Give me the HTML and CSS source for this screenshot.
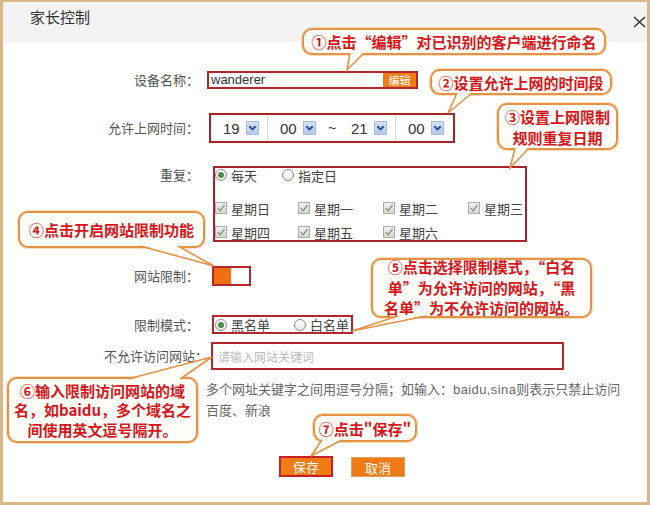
FILE: index.html
```html
<!DOCTYPE html>
<html lang="zh-CN">
<head>
<meta charset="utf-8">
<title>家长控制</title>
<link rel="stylesheet" href="styles.css">
</head>
<body>
<div class="frame">
  <div class="header">
    <span class="title">家长控制</span>
    <svg class="close" width="13" height="12" viewBox="0 0 13 12"><path d="M1 1L12 11M12 1L1 11" stroke="#333" stroke-width="1.5" fill="none"/></svg>
  </div>
  <div class="form">
    <div class="row row-name">
      <span class="lbl">设备名称：</span>
      <div class="name-box"><span class="name-text">wanderer</span><span class="edit-btn">编辑</span></div>
    </div>
    <div class="row row-time">
      <span class="lbl">允许上网时间：</span>
      <div class="time-box">
        <span class="sel sep"><span class="num">19</span><span class="arr"><svg width="12" height="12" viewBox="0 0 12 12"><polyline points="2.5,4 6,7.5 9.5,4" fill="none" stroke="#2b4f8f" stroke-width="2.2"/></svg></span></span>
        <span class="sel"><span class="num">00</span><span class="arr"><svg width="12" height="12" viewBox="0 0 12 12"><polyline points="2.5,4 6,7.5 9.5,4" fill="none" stroke="#2b4f8f" stroke-width="2.2"/></svg></span></span>
        <span class="tilde">~</span>
        <span class="sel sep"><span class="num">21</span><span class="arr"><svg width="12" height="12" viewBox="0 0 12 12"><polyline points="2.5,4 6,7.5 9.5,4" fill="none" stroke="#2b4f8f" stroke-width="2.2"/></svg></span></span>
        <span class="sel"><span class="num">00</span><span class="arr"><svg width="12" height="12" viewBox="0 0 12 12"><polyline points="2.5,4 6,7.5 9.5,4" fill="none" stroke="#2b4f8f" stroke-width="2.2"/></svg></span></span>
      </div>
    </div>
    <div class="row row-repeat">
      <span class="lbl">重复：</span>
      <div class="repeat-box">
        <div class="radios">
          <span class="opt w67"><i class="radio on"></i>每天</span>
          <span class="opt"><i class="radio"></i>指定日</span>
        </div>
        <div class="days">
          <span class="opt"><i class="chk"><svg width="10" height="10" viewBox="0 0 10 10"><polyline points="2,5 4,8 8.5,2" fill="none" stroke="#7f9a70" stroke-width="1.3"/></svg></i>星期日</span>
          <span class="opt"><i class="chk"><svg width="10" height="10" viewBox="0 0 10 10"><polyline points="2,5 4,8 8.5,2" fill="none" stroke="#7f9a70" stroke-width="1.3"/></svg></i>星期一</span>
          <span class="opt"><i class="chk"><svg width="10" height="10" viewBox="0 0 10 10"><polyline points="2,5 4,8 8.5,2" fill="none" stroke="#7f9a70" stroke-width="1.3"/></svg></i>星期二</span>
          <span class="opt"><i class="chk"><svg width="10" height="10" viewBox="0 0 10 10"><polyline points="2,5 4,8 8.5,2" fill="none" stroke="#7f9a70" stroke-width="1.3"/></svg></i>星期三</span>
          <span class="opt"><i class="chk"><svg width="10" height="10" viewBox="0 0 10 10"><polyline points="2,5 4,8 8.5,2" fill="none" stroke="#7f9a70" stroke-width="1.3"/></svg></i>星期四</span>
          <span class="opt"><i class="chk"><svg width="10" height="10" viewBox="0 0 10 10"><polyline points="2,5 4,8 8.5,2" fill="none" stroke="#7f9a70" stroke-width="1.3"/></svg></i>星期五</span>
          <span class="opt"><i class="chk"><svg width="10" height="10" viewBox="0 0 10 10"><polyline points="2,5 4,8 8.5,2" fill="none" stroke="#7f9a70" stroke-width="1.3"/></svg></i>星期六</span>
        </div>
      </div>
    </div>
    <div class="row row-toggle">
      <span class="lbl">网站限制：</span>
      <div class="toggle"><span class="toggle-on"></span></div>
    </div>
    <div class="row row-mode">
      <span class="lbl">限制模式：</span>
      <div class="mode-box">
        <span class="opt w79"><i class="radio on"></i>黑名单</span>
        <span class="opt"><i class="radio"></i>白名单</span>
      </div>
    </div>
    <div class="row row-sites">
      <span class="lbl lbl-wide">不允许访问网站：</span>
      <div class="sites-input">请输入网站关键词</div>
    </div>
    <div class="hint">多个网址关键字之间用逗号分隔；如输入：<span class="latin">baidu,sina</span>则表示只禁止访问<br>百度、新浪</div>
    <div class="actions">
      <span class="btn save">保存</span>
      <span class="btn cancel">取消</span>
    </div>
  </div>

  <div class="notes">
    <div class="bubble b1">①点击“编辑”对已识别的客户端进行命名</div>
    <div class="bubble b2">②设置允许上网的时间段</div>
    <div class="bubble b3">③设置上网限制<br>规则重复日期</div>
    <div class="bubble b4">④点击开启网站限制功能</div>
    <div class="bubble b5">⑤点击选择限制模式，“白名<br>单”为允许访问的网站，“黑<br>名单”为不允许访问的网站。</div>
    <div class="bubble b6">⑥输入限制访问网站的域<br>名，如baidu，多个域名之<br>间使用英文逗号隔开。</div>
    <div class="bubble b7">⑦点击"保存"</div>
    <svg class="tails" width="650" height="505" viewBox="0 0 650 505">
      <g fill="#fffdf7" stroke="none">
        <polygon points="350,52 364,52 347,70"/>
        <polygon points="457,92 472,92 448,113"/>
        <polygon points="515,147 529,147 510,168"/>
        <polygon points="140,245 178,245 214,266"/>
        <polygon points="398,315 426,315 352,331"/>
        <polygon points="128,380 180,380 212,357"/>
        <polygon points="322,439 342,439 311,456"/>
      </g>
      <g fill="none" stroke="#e39248" stroke-width="1.6" stroke-linejoin="miter">
        <polyline points="350,53 347,70 364,53"/>
        <polyline points="457,93 448,113 472,93"/>
        <polyline points="515,148 510,168 529,148"/>
        <polyline points="140,246 214,266 178,246"/>
        <polyline points="398,316 352,331 426,316"/>
        <polyline points="128,379 212,357 180,379"/>
        <polyline points="322,440 311,456 342,440"/>
      </g>
    </svg>
  </div>
</div>
</body>
</html>
```

FILE: styles.css
```css
body {
  margin: 0;
  background: #fff;
  font-family: "Liberation Sans", "Noto Sans CJK SC", sans-serif;
}

.frame {
  position: relative;
  width: 650px;
  height: 505px;
  box-sizing: border-box;
  border-style: solid;
  border-color: #d8b886;
  border-width: 2px 3px 3px 3px;
  background: #fff;
  overflow: hidden;
}

.header {
  height: 40px;
  background: #f3f3f3;
  display: flex;
  justify-content: space-between;
  align-items: flex-start;
}

.title {
  margin: 5px 0 0 27px;
  font-family: "Noto Sans CJK SC", sans-serif;
  font-size: 15px;
  line-height: 20px;
  color: #333;
}

.close {
  margin: 14px 1px 0 0;
}

.form {
  padding-top: 29px;
}

.row {
  display: flex;
  align-items: center;
}

.lbl {
  flex: none;
  width: 196px;
  text-align: right;
  font-family: "Noto Sans CJK SC", sans-serif;
  font-size: 13px;
  line-height: 18px;
  color: #555;
}

.lbl-wide {
  width: 205px;
}

/* device name */
.name-box {
  margin-left: 8px;
  width: 211px;
  height: 18px;
  box-sizing: border-box;
  border: 2px solid #b3262c;
  display: flex;
}

.name-text {
  flex: 1;
  padding-left: 2px;
  font-size: 13px;
  line-height: 14px;
  color: #333;
}

.edit-btn {
  width: 33px;
  background: #f07c16;
  color: #fff;
  font-family: "Noto Sans CJK SC", sans-serif;
  font-size: 11px;
  line-height: 14px;
  text-align: center;
}

/* time */
.row-time {
  margin-top: 24px;
}

.time-box {
  margin-left: 10px;
  width: 246px;
  height: 30px;
  box-sizing: border-box;
  border: 2px solid #a9232a;
  display: flex;
  align-items: center;
}

.sel {
  width: 57px;
  height: 26px;
  box-sizing: border-box;
  padding-left: 12px;
  display: flex;
  align-items: center;
  gap: 6px;
}

.sel.sep {
  border-right: 1px solid #dcdcdc;
}

.num {
  width: 17px;
  font-size: 15px;
  color: #333;
}

.arr {
  width: 13px;
  height: 14px;
  box-sizing: border-box;
  border: 1px solid #a7bde0;
  background: linear-gradient(#d4e2f5, #b3c9ea);
  display: flex;
  align-items: center;
  justify-content: center;
}

.tilde {
  width: 14px;
  text-align: center;
  font-size: 14px;
  color: #333;
}

/* repeat */
.row-repeat {
  margin-top: 23px;
  align-items: flex-start;
}

.repeat-box {
  margin-left: 14px;
  width: 314px;
  height: 76px;
  box-sizing: border-box;
  border: 2px solid #a9232a;
}

.radios {
  display: flex;
  align-items: center;
  height: 14px;
}

.opt {
  display: flex;
  align-items: center;
  gap: 4px;
  font-family: "Noto Sans CJK SC", sans-serif;
  font-size: 13px;
  color: #444;
  white-space: nowrap;
}

.w67 { width: 67px; }
.w79 { width: 79px; }

.radio {
  width: 10px;
  height: 10px;
  border: 1px solid #8a8a8a;
  border-radius: 50%;
  background: linear-gradient(#fff, #e8e8e8);
  display: flex;
  align-items: center;
  justify-content: center;
}

.radio.on::after {
  content: "";
  width: 6px;
  height: 6px;
  border-radius: 50%;
  background: #4e8a4e;
}

.days {
  margin-top: 14px;
  display: grid;
  grid-template-columns: 83px 85px 85px auto;
  grid-auto-rows: 24px;
  align-items: center;
}

.chk {
  width: 10px;
  height: 10px;
  border: 1px solid #ababab;
  background: linear-gradient(#f0f0f0, #d6d6d6);
  display: flex;
  align-items: center;
  justify-content: center;
}

/* toggle */
.row-toggle {
  margin-top: 24px;
}

.toggle {
  margin-left: 13px;
  width: 39px;
  height: 20px;
  box-sizing: border-box;
  border: 2px solid #b3262c;
  display: flex;
  background: #fff;
}

.toggle-on {
  width: 17px;
  background: #f07010;
}

/* mode */
.row-mode {
  margin-top: 29px;
}

.mode-box {
  margin-left: 13px;
  width: 141px;
  height: 19px;
  box-sizing: border-box;
  border: 2px solid #b3262c;
  padding-left: 1px;
  display: flex;
  align-items: center;
}

/* sites */
.row-sites {
  margin-top: 8px;
}

.sites-input {
  margin-left: 3px;
  width: 353px;
  height: 28px;
  box-sizing: border-box;
  border: 2px solid #b3262c;
  padding-left: 5px;
  display: flex;
  align-items: center;
  font-family: "Noto Sans CJK SC", sans-serif;
  font-size: 12px;
  color: #bbb;
}

.hint {
  margin: 9px 0 0 203px;
  font-size: 13px;
  line-height: 21px;
  color: #666;
}

.latin {
  letter-spacing: 0.4px;
}

.actions {
  margin-top: 35px;
  padding-left: 276px;
  display: flex;
  align-items: flex-start;
  gap: 18px;
}

.btn {
  width: 54px;
  height: 21px;
  box-sizing: border-box;
  background: #f07a14;
  color: #fff;
  font-family: "Noto Sans CJK SC", sans-serif;
  font-size: 13px;
  display: flex;
  align-items: center;
  justify-content: center;
}

.save {
  border: 2px solid #c8202a;
}

.cancel {
  margin-top: 1px;
  height: 20px;
  border: 1px solid #e0a060;
}

/* annotation overlay */
.notes {
  position: absolute;
  left: -3px;
  top: -2px;
  width: 650px;
  height: 505px;
  pointer-events: none;
}

.bubble {
  position: absolute;
  box-sizing: border-box;
  border: 2px solid #e39248;
  border-radius: 10px;
  background: #fffdf7;
  box-shadow: 0 0 0 1px #f7ddbc;
  display: flex;
  align-items: center;
  justify-content: center;
  text-align: center;
  font-family: "Noto Sans CJK SC", sans-serif;
  font-weight: 700;
  font-size: 15px;
  line-height: 21px;
  color: #d5151c;
  white-space: nowrap;
}

.b1 { left: 302px; top: 28px; width: 304px; height: 27px; }
.b2 { left: 430px; top: 69px; width: 182px; height: 26px; }
.b3 { left: 497px; top: 103px; width: 121px; height: 47px; }
.b4 { left: 18px; top: 211px; width: 187px; height: 37px; }
.b5 { left: 371px; top: 258px; width: 221px; height: 60px; line-height: 20.5px; }
.b6 { left: 7px; top: 377px; width: 191px; height: 66px; line-height: 19.5px; }
.b7 { left: 313px; top: 414px; width: 104px; height: 28px; }

.tails {
  position: absolute;
  left: 0;
  top: 0;
}
```
